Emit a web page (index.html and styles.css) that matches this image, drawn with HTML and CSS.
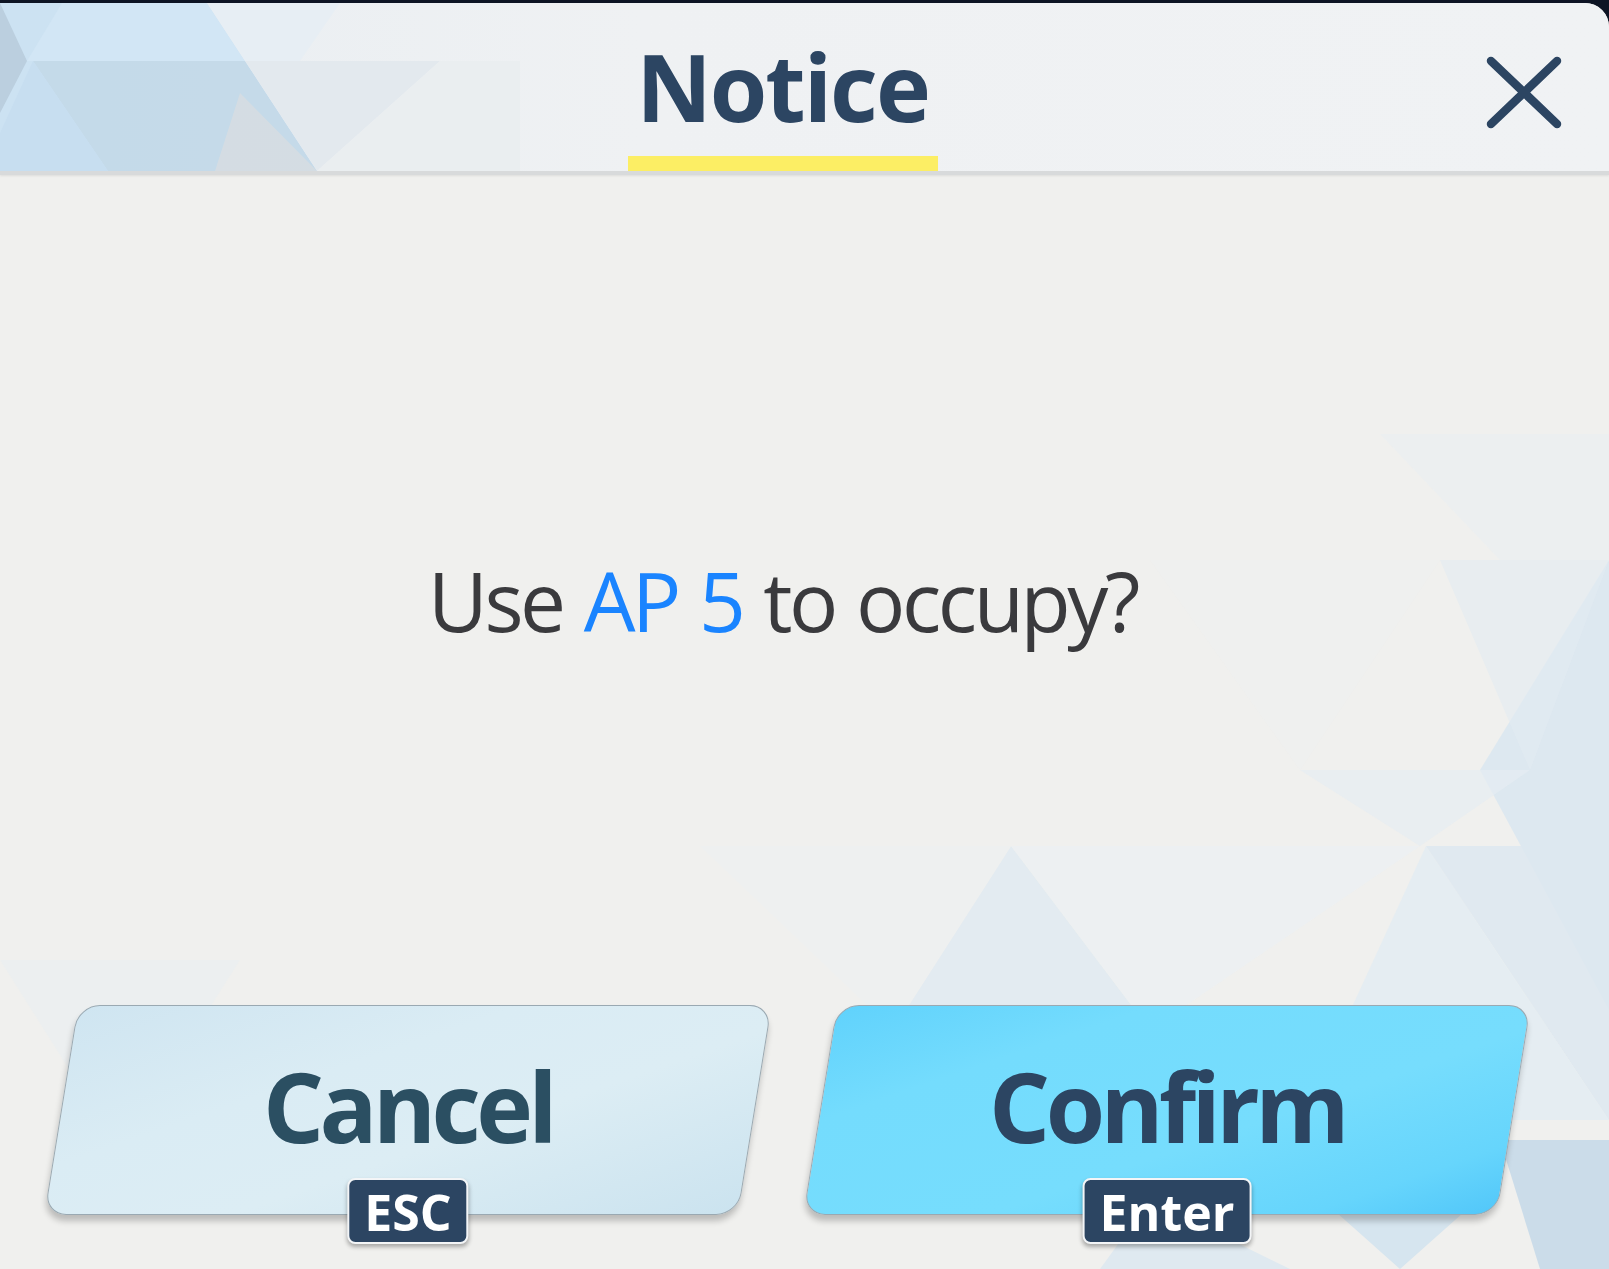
FILE: index.html
```html
<!DOCTYPE html>
<html lang="en">
<head>
<meta charset="utf-8">
<title>Notice</title>
<link rel="stylesheet" href="styles.css">
</head>
<body>
<div class="dialog">
  <svg class="dialog-bg" width="1609" height="1266" viewBox="0 3 1609 1266" aria-hidden="true">
    <polygon points="1380,434 1609,434 1609,560 1500,560" fill="#e9eef1" opacity="0.6"/>
    <polygon points="1609,560 1609,1010 1480,770" fill="#d7e6f0" opacity="0.75"/>
    <polygon points="1440,560 1609,560 1530,770" fill="#e2ebf1" opacity="0.6"/>
    <polygon points="1150,560 1440,560 1300,770" fill="#eef0f0" opacity="0.7"/>
    <polygon points="1300,770 1530,770 1420,846" fill="#e6edf2" opacity="0.7"/>
    <polygon points="1011,846 893,1030 1150,1030" fill="#e0eaf1" opacity="0.85"/>
    <polygon points="1011,846 1420,846 1150,1030" fill="#ecf0f2" opacity="0.85"/>
    <polygon points="1426,846 1609,846 1609,1120" fill="#dde8f0" opacity="0.85"/>
    <polygon points="1426,846 1609,1120 1300,1120" fill="#e3ecf2" opacity="0.85"/>
    <polygon points="700,846 1011,846 893,1030" fill="#eef0f0"/>
    <polygon points="1300,1180 1500,1180 1400,1269" fill="#d6e5ef"/>
    <polygon points="1500,1140 1609,1140 1609,1269 1540,1269" fill="#cbdce9"/>
    <polygon points="1150,1200 1290,1269 1100,1269" fill="#dfe9f0"/>
    <polygon points="0,960 240,960 120,1150" fill="#eceff0"/>
  </svg>
  <header class="header">
    <svg class="header-bg" width="520" height="168" viewBox="0 0 520 168" aria-hidden="true">
      <polygon points="0,0 207,0 317,168 0,168" fill="#cbe2f3"/>
      <polygon points="62,0 207,0 245,58 27,58" fill="#d1e6f6"/>
      <polygon points="33,58 245,58 317,168 108,168" fill="#c3d9e9"/>
      <polygon points="0,0 27,58 0,110" fill="#b9cede"/>
      <polygon points="0,130 33,58 108,168 0,168" fill="#c6def0"/>
      <polygon points="207,0 340,0 300,58 245,58" fill="#e7eef5"/>
      <polygon points="240,90 317,168 215,168" fill="#d3dce3"/>
      <polygon points="245,58 440,58 317,168" fill="#e3e9ee"/>
      <polygon points="317,168 440,58 520,58 520,168" fill="#eaeef0"/>
    </svg>
    <div class="header-side"></div>
    <div class="title-wrap">
      <h1 class="title">Notice</h1>
      <div class="title-bar"></div>
    </div>
    <div class="header-side header-side-right">
      <button class="close" aria-label="Close">
        <svg width="80" height="80" viewBox="0 0 80 80">
          <path d="M7 8 L73 71 M73 8 L7 71" stroke="#2c4562" stroke-width="8.5" stroke-linecap="round" fill="none"/>
        </svg>
      </button>
    </div>
  </header>
  <main class="content">
    <p class="message">Use <span class="highlight">AP 5</span> to occupy?</p>
    <div class="actions">
      <button class="btn btn-cancel"><span class="btn-label">Cancel</span><span class="key">ESC</span></button>
      <button class="btn btn-confirm"><span class="btn-label">Confirm</span><span class="key">Enter</span></button>
    </div>
  </main>
</div>
</body>
</html>
```
FILE: styles.css
```css
html, body {
  margin: 0;
  padding: 0;
  height: 100%;
  overflow: hidden;
  background: #0d1424;
}

.dialog {
  position: relative;
  margin-top: 3px;
  height: 1266px;
  background: #f0f0ee;
  border-top-right-radius: 24px;
  overflow: hidden;
  font-family: "Open Sans", "Noto Sans", sans-serif;
}

.dialog-bg {
  position: absolute;
  left: 0;
  top: 0;
  z-index: 0;
}

.header {
  position: relative;
  z-index: 1;
  height: 168px;
  display: grid;
  grid-template-columns: 1fr auto 1fr;
  padding-right: 44px;
  background: linear-gradient(90deg, #e9eef2 0%, #eff1f3 40%, #f0f2f4 100%);
  border-bottom: 4px solid #d8dadb;
  box-shadow: 0 1px 2px rgba(0, 0, 0, 0.08);
}

.header-bg {
  position: absolute;
  left: 0;
  top: 0;
  opacity: 0.95;
}

.header-side {
  position: relative;
  display: flex;
  justify-content: flex-end;
  align-items: flex-start;
}

.title-wrap {
  position: relative;
  display: flex;
  flex-direction: column;
  align-items: center;
}

.title {
  margin: 37px 0 0;
  font-size: 93px;
  line-height: 1;
  font-weight: 700;
  color: #2c4562;
  letter-spacing: -2px;
}

.title-bar {
  margin-top: 23px;
  width: 310px;
  height: 15px;
  background: #fcee64;
}

.close {
  margin: 50px 1px 0 0;
  padding: 0;
  border: 0;
  background: none;
  width: 80px;
  height: 80px;
  display: block;
}

.close svg {
  display: block;
}

.content {
  position: relative;
  z-index: 1;
  display: flex;
  flex-direction: column;
}

.message {
  margin: 384px 44px 0 0;
  text-align: center;
  font-size: 82px;
  line-height: 1;
  font-weight: 400;
  color: #3a3a3d;
  letter-spacing: -3.4px;
  word-spacing: 3px;
}

.highlight {
  color: #1a84ff;
}

.actions {
  display: flex;
  gap: 65px;
  padding-left: 61px;
  margin-top: 364px;
}

.btn {
  position: relative;
  width: 694px;
  height: 210px;
  padding: 0 0 8px;
  border: 0;
  background: none;
  font-family: "Open Sans", "Noto Sans", sans-serif;
  font-size: 96px;
  line-height: 1;
  font-weight: 700;
  letter-spacing: -4.6px;
  display: flex;
  align-items: center;
  justify-content: center;
}

.btn::before {
  content: "";
  position: absolute;
  inset: 0;
  transform: skewX(-9.2deg);
  border-radius: 22px;
  border: 1.5px solid #9aa9b2;
  box-shadow: 0 6px 6px rgba(0, 0, 0, 0.22);
  z-index: 0;
}

.btn-cancel {
  color: #2b4f62;
}

.btn-cancel::before {
  background: linear-gradient(160deg, #cfe5f1 0%, #daecf4 35%, #dcedf4 60%, #cbe3ef 100%);
}

.btn-confirm {
  color: #2c4562;
}

.btn-confirm::before {
  background: linear-gradient(160deg, #60d2fc 0%, #74dcfd 25%, #76ddfd 60%, #66d5fc 85%, #52c7f9 100%);
}

.btn-label {
  position: relative;
  z-index: 1;
}

.key {
  position: absolute;
  z-index: 2;
  top: 173px;
  left: 50%;
  transform: translateX(-50%);
  padding: 7px 15px 5px;
  background: #2c4562;
  border: 2px solid #f3f5f7;
  border-radius: 8px;
  box-shadow: 0 3px 4px rgba(0, 0, 0, 0.3);
  color: #ffffff;
  font-size: 50px;
  line-height: 1;
  font-weight: 700;
  letter-spacing: 0;
}
```
